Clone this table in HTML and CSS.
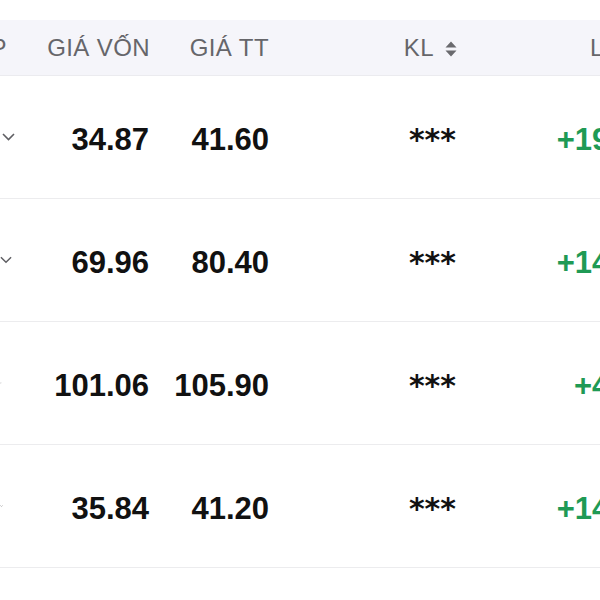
FILE: index.html
```html
<!DOCTYPE html>
<html lang="vi">
<head>
<meta charset="utf-8">
<link rel="stylesheet" href="styles.css">
</head>
<body>
<div class="table">
  <div class="row head">
    <div class="cell c0"><span>MÃ CP</span></div>
    <div class="cell c1">GIÁ VỐN</div>
    <div class="cell c2">GIÁ TT</div>
    <div class="cell c3">KL
      <svg class="sort" width="12" height="16" viewBox="0 0 12 16"><path d="M6 0.5 L11.5 6.5 H0.5 Z M6 15.5 L11.5 9.5 H0.5 Z" fill="#6a6a6e"/></svg>
    </div>
    <div class="cell c4h">LÃI/LỖ</div>
  </div>

  <div class="row">
    <div class="cell c0"><svg class="chev ck1" width="13" height="8" viewBox="0 0 13 8"><path d="M1 1 L6.5 6.5 L12 1" fill="none" stroke="#5f5f63" stroke-width="1.6"/></svg></div>
    <div class="cell c1 num">34.87</div>
    <div class="cell c2 num">41.60</div>
    <div class="cell c3 mask">***</div>
    <div class="cell c4 pos">+19.30%</div>
  </div>

  <div class="row">
    <div class="cell c0"><svg class="chev ck2" width="13" height="8" viewBox="0 0 13 8"><path d="M1 1 L6.5 6.5 L12 1" fill="none" stroke="#5f5f63" stroke-width="1.6"/></svg></div>
    <div class="cell c1 num">69.96</div>
    <div class="cell c2 num">80.40</div>
    <div class="cell c3 mask">***</div>
    <div class="cell c4 pos">+14.92%</div>
  </div>

  <div class="row">
    <div class="cell c0"><svg class="chev ck3" width="13" height="8" viewBox="0 0 13 8"><path d="M1 1 L6.5 6.5 L12 1" fill="none" stroke="#5f5f63" stroke-width="1.6"/></svg></div>
    <div class="cell c1 num">101.06</div>
    <div class="cell c2 num">105.90</div>
    <div class="cell c3 mask">***</div>
    <div class="cell c4 pos">+4.79%</div>
  </div>

  <div class="row">
    <div class="cell c0"><svg class="chev ck4" width="13" height="8" viewBox="0 0 13 8"><path d="M1 1 L6.5 6.5 L12 1" fill="none" stroke="#5f5f63" stroke-width="1.6"/></svg></div>
    <div class="cell c1 num">35.84</div>
    <div class="cell c2 num">41.20</div>
    <div class="cell c3 mask">***</div>
    <div class="cell c4 pos">+14.96%</div>
  </div>
</div>
</body>
</html>
```

FILE: styles.css
```css
html, body {
  margin: 0;
  padding: 0;
  background: #ffffff;
  overflow: hidden;
  width: 600px;
  height: 600px;
}

body {
  font-family: "Liberation Sans", Arial, sans-serif;
  color: #111;
}

.table {
  margin-top: 20px;
  width: 680px;
}

.row {
  display: grid;
  grid-template-columns: 30px 119px 120px 188px 223px;
  height: 122px;
  border-bottom: 1px solid #ececee;
  align-items: center;
}

.row.head {
  height: 55px;
  background: #f5f5fa;
  border-bottom: 1px solid #ebebef;
  font-size: 24px;
  letter-spacing: 0.4px;
  color: #66666a;
}

.cell {
  display: flex;
  align-items: center;
  justify-content: flex-end;
  white-space: nowrap;
}

.head .cell {
  padding-top: 1px;
}

.head .c0 span {
  margin-right: 23px;
}

.head .c1 {
  margin-right: -1px;
}

.sort {
  margin-left: 11px;
  margin-top: 1px;
}

.c4h {
  justify-content: flex-start;
  padding-left: 133px;
}

.num,
.pos {
  font-size: 31px;
  font-weight: bold;
  padding-top: 5px;
}

.pos {
  color: #1f9a55;
}

.mask {
  font-family: "DejaVu Sans", sans-serif;
  font-size: 30px;
  font-weight: bold;
  letter-spacing: 0;
  padding-top: 4px;
  margin-right: 1px;
}

.chev {
  display: block;
}

.ck1 { margin-right: 15px; }
.ck2 { margin-right: 18px; }
.ck3 { margin-right: 28px; }
.ck4 { margin-right: 27px; }
```
